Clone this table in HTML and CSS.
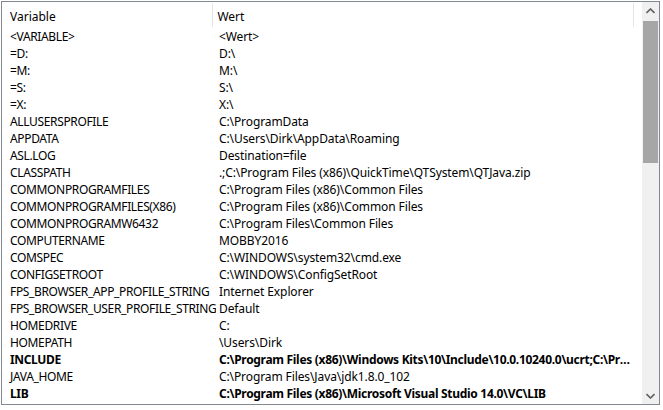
FILE: index.html
```html
<!DOCTYPE html>
<html lang="de">
<head>
  <meta charset="UTF-8" />
  <title>Umgebungsvariablen</title>
  <link rel="stylesheet" href="styles.css">
</head>
<body>

  <div class="listview">
    <div class="list">
      <div class="head">
        <div class="col col-name">Variable</div>
        <div class="col col-value">Wert</div>
        <div class="col col-rest"></div>
      </div>

      <div class="rows">
        <div class="row"><span>&lt;VARIABLE&gt;</span><span>&lt;Wert&gt;</span></div>
        <div class="row"><span>=D:</span><span>D:\</span></div>
        <div class="row"><span>=M:</span><span>M:\</span></div>
        <div class="row"><span>=S:</span><span>S:\</span></div>
        <div class="row"><span>=X:</span><span>X:\</span></div>
        <div class="row"><span>ALLUSERSPROFILE</span><span>C:\ProgramData</span></div>
        <div class="row"><span>APPDATA</span><span>C:\Users\Dirk\AppData\Roaming</span></div>
        <div class="row"><span>ASL.LOG</span><span>Destination=file</span></div>
        <div class="row"><span>CLASSPATH</span><span>.;C:\Program Files (x86)\QuickTime\QTSystem\QTJava.zip</span></div>
        <div class="row"><span>COMMONPROGRAMFILES</span><span>C:\Program Files (x86)\Common Files</span></div>
        <div class="row"><span>COMMONPROGRAMFILES(X86)</span><span>C:\Program Files (x86)\Common Files</span></div>
        <div class="row"><span>COMMONPROGRAMW6432</span><span>C:\Program Files\Common Files</span></div>
        <div class="row"><span>COMPUTERNAME</span><span>MOBBY2016</span></div>
        <div class="row"><span>COMSPEC</span><span>C:\WINDOWS\system32\cmd.exe</span></div>
        <div class="row"><span>CONFIGSETROOT</span><span>C:\WINDOWS\ConfigSetRoot</span></div>
        <div class="row"><span>FPS_BROWSER_APP_PROFILE_STRING</span><span>Internet Explorer</span></div>
        <div class="row"><span>FPS_BROWSER_USER_PROFILE_STRING</span><span>Default</span></div>
        <div class="row"><span>HOMEDRIVE</span><span>C:</span></div>
        <div class="row"><span>HOMEPATH</span><span>\Users\Dirk</span></div>
        <div class="row bold"><span>INCLUDE</span><span>C:\Program Files (x86)\Windows Kits\10\Include\10.0.10240.0\ucrt;C:\Program Files (x86)\Microsoft Visual Studio 14.0\VC\INCLUDE</span></div>
        <div class="row"><span>JAVA_HOME</span><span>C:\Program Files\Java\jdk1.8.0_102</span></div>
        <div class="row bold"><span>LIB</span><span>C:\Program Files (x86)\Microsoft Visual Studio 14.0\VC\LIB</span></div>
      </div>
    </div>

    <!-- vertical scrollbar -->
    <div class="scrollbar">
      <div class="arrow">
        <svg width="9" height="6" viewBox="0 0 9 6"><path d="M0.5 5 L4.5 1 L8.5 5" fill="none" stroke="#606060" stroke-width="1.6"/></svg>
      </div>
      <div class="track">
        <div class="thumb"></div>
      </div>
      <div class="arrow">
        <svg width="9" height="6" viewBox="0 0 9 6"><path d="M0.5 1 L4.5 5 L8.5 1" fill="none" stroke="#606060" stroke-width="1.6"/></svg>
      </div>
    </div>
  </div>

</body>
</html>
```

FILE: styles.css
```css
* {
  margin: 0;
  padding: 0;
  box-sizing: border-box;
}

body {
  background: #fff;
  font-family: "Noto Sans", "Liberation Sans", sans-serif;
  font-size: 12px;
  color: #000;
  padding: 1px;
}

.listview {
  width: 659px;
  height: 404px;
  border: 1px solid #828790;
  display: flex;
  overflow: hidden;
}

.list {
  flex: 1;
  min-width: 0;
  display: flex;
  flex-direction: column;
}

.head {
  display: flex;
  height: 26px;
  flex-shrink: 0;
}

.head .col {
  padding: 6px 0 0 8px;
  border-right: 1px solid #e5e5e5;
  margin: 1px 0;
  line-height: 16px;
}

.head .col-name { width: 214px; }
.head .col-value { width: 426px; padding-left: 4px; }
.head .col-rest { flex: 1; border-right: none; }

.rows {
  flex: 1;
}

.row {
  display: flex;
  height: 17px;
  line-height: 17px;
  white-space: nowrap;
}

.row span:first-child {
  width: 214px;
  padding-left: 8px;
  flex-shrink: 0;
  overflow: hidden;
  letter-spacing: -0.35px;
}

.row span:last-child {
  flex: 1;
  min-width: 0;
  padding-left: 3px;
  padding-right: 6px;
  overflow: hidden;
  text-overflow: ellipsis;
  letter-spacing: -0.1px;
}

.row.bold { font-weight: bold; }
.row.bold span:last-child { letter-spacing: -0.3px; }

.scrollbar {
  width: 17px;
  flex-shrink: 0;
  background: #f0f0f0;
  display: flex;
  flex-direction: column;
}

.arrow {
  height: 17px;
  display: flex;
  align-items: center;
  justify-content: center;
}

.track {
  flex: 1;
  padding: 2px 1px 0;
}

.thumb {
  height: 142px;
  background: #a6a6a6;
}
```
